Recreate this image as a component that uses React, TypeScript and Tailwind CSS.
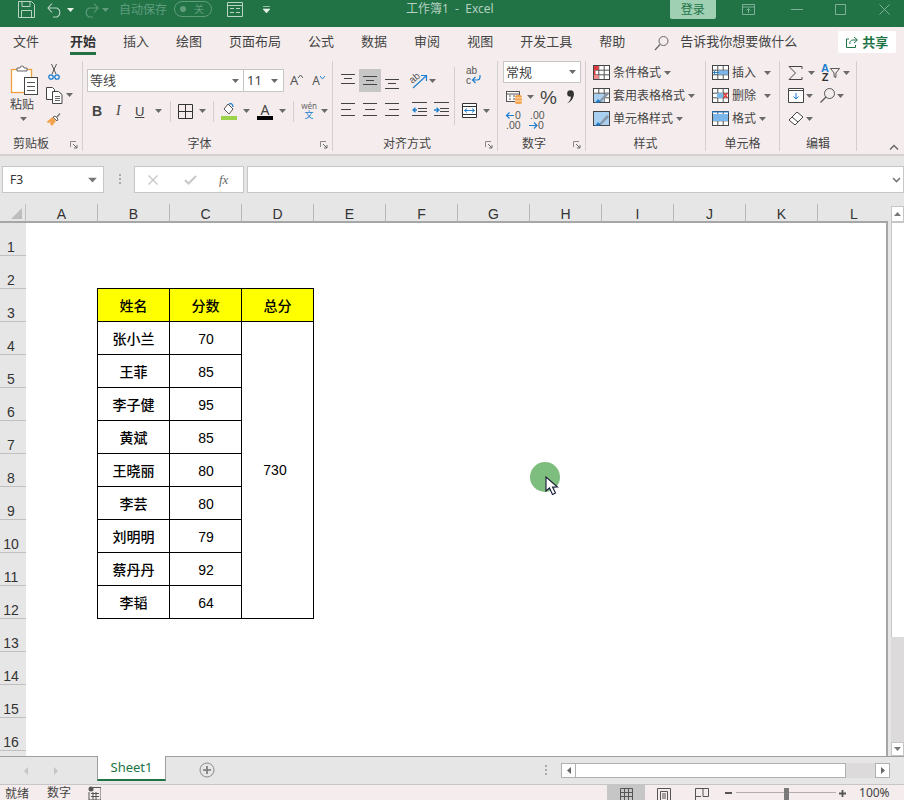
import React from "react";

const FONT = { fontFamily: '"Noto Sans","Noto Sans CJK SC",sans-serif' };

function Caret({ c = "#6a6a6a", className = "" }: { c?: string; className?: string }) {
  return (
    <svg width="7" height="4" viewBox="0 0 7 4" className={"shrink-0 " + className}>
      <path d="M0 0h7L3.5 4z" fill={c} />
    </svg>
  );
}

function Launcher() {
  return (
    <svg width="8" height="8" viewBox="0 0 8 8" className="shrink-0">
      <path d="M.5 6V.5H6" fill="none" stroke="#8a8a8a" />
      <path d="M3 3l4 4M7 4v3H4" fill="none" stroke="#6a6a6a" />
    </svg>
  );
}

function Label({ children, launcher = false, pr = "" }: { children: React.ReactNode; launcher?: boolean; pr?: string }) {
  return (
    <div className="flex h-[20px] shrink-0 items-center pt-[6px]">
      <span className={"flex-1 text-center text-[12px] leading-none text-[#444] " + pr}>{children}</span>
      {launcher ? (
        <span className="mr-[4px] mt-[2px]">
          <Launcher />
        </span>
      ) : null}
    </div>
  );
}

function Lines({ ys, w = 15, h = 15, seg }: { ys: number[]; w?: number; h?: number; seg?: [number, number][] }) {
  return (
    <svg width={w} height={h} viewBox={`0 0 ${w} ${h}`} className="shrink-0">
      {ys.map((y, i) => (
        <path key={i} d={`M${seg ? seg[i][0] : 0} ${y}.5H${seg ? seg[i][1] : w}`} stroke="#444" />
      ))}
    </svg>
  );
}

function Indent({ right = false }: { right?: boolean }) {
  return (
    <svg width="15" height="15" viewBox="0 0 15 15" className="shrink-0">
      <path d="M0 0.5H15M6 6.5H15M6 9.5H15M0 13.5H15" stroke="#444" />
      <path
        d={right ? "M0 8h4M2.5 5.7 5 8l-2.5 2.3" : "M5 8H1M3.5 5.7 1 8l2.5 2.3"}
        stroke="#1e7fd0"
        strokeWidth="1.3"
        fill="none"
      />
    </svg>
  );
}

function CellGridIcon({ children }: { children?: React.ReactNode }) {
  return (
    <svg width="17" height="15" viewBox="0 0 17 15" className="shrink-0">
      <rect x=".5" y=".5" width="16" height="14" fill="#fff" stroke="#444" />
      <path d="M.5 5.2h16M.5 9.8h16M5.8.5v14M11.2.5v14" stroke="#555" />
      {children}
    </svg>
  );
}

function StyleRow({ icon, text, caretGap = "ml-[3px]" }: { icon: React.ReactNode; text: string; caretGap?: string }) {
  return (
    <div className="flex h-[23px] items-center">
      {icon}
      <span className="ml-[3px] whitespace-nowrap text-[12px] leading-none text-[#444]">{text}</span>
      <Caret className={caretGap} />
    </div>
  );
}

const Brush = () => (
  <g>
    <path d="M6 13l8-9 2 2-8 8z" fill="#8a97a6" />
    <path d="M2 15l3-4 3 3z" fill="#1e7fd0" />
  </g>
);

function TitleBar() {
  const dim = "#5f9c7c";
  const lit = "#b9d3c4";
  return (
    <div className="flex h-[27px] items-start bg-[#217346] text-[12px]">
      <svg width="17" height="17" viewBox="0 0 17 17" className="ml-[18px] mt-[1px] shrink-0">
        <path d="M.5.5h13l3 3v13H.5z M4 .5v5h8v-5 M3.5 16.5v-7h10v7" fill="none" stroke={lit} />
      </svg>
      <svg width="16" height="16" viewBox="0 0 16 16" className="ml-[12px] mt-[2px] shrink-0">
        <path d="M1 6h9a5 5 0 0 1 0 9H6M5 1.5 1 6l4 4.5" fill="none" stroke={lit} strokeWidth="1.1" />
      </svg>
      <Caret c="#e8f0ea" className="ml-[4px] mt-[8px]" />
      <svg width="16" height="16" viewBox="0 0 16 16" className="ml-[9px] mt-[2px] shrink-0">
        <path d="M15 6H6a5 5 0 0 0 0 9h4M11 1.5 15 6l-4 4.5" fill="none" stroke={dim} strokeWidth="1.1" />
      </svg>
      <Caret c={dim} className="ml-[3px] mt-[8px]" />
      <span className="ml-[10px] mt-[1px] whitespace-nowrap leading-[18px]" style={{ color: dim }}>
        自动保存
      </span>
      <div className="ml-[7px] mt-[1px] flex h-[16px] w-[38px] shrink-0 items-center justify-between rounded-full border border-[#5f9c7c] pl-[5px] pr-[7px]">
        <span className="h-[6px] w-[6px] rounded-full bg-[#5f9c7c]" />
        <span className="text-[10px] leading-none" style={{ color: dim }}>
          关
        </span>
      </div>
      <svg width="16" height="15" viewBox="0 0 16 15" className="ml-[15px] mt-[2px] shrink-0">
        <path d="M.5.5h15v14H.5zM.5 3.500h15M3 6.500h4M9 6.500h4M3 10.500h4M9 10.500h4" fill="none" stroke={lit} />
      </svg>
      <svg width="7" height="8" viewBox="0 0 7 8" className="ml-[20px] mt-[6px] shrink-0">
        <path d="M0 .5h7M0 3h7L3.500 7z" fill="#e8f0ea" stroke="#e8f0ea" strokeWidth=".6" />
      </svg>
      <span className="ml-[136px] whitespace-nowrap leading-[18px] text-[#b4d0c0]">工作簿1&nbsp; -&nbsp; Excel</span>
      <div className="ml-[176px] flex h-[19px] w-[46px] shrink-0 items-center justify-center rounded-b-[2px] bg-[#9fd0b4] text-[#217346]">
        登录
      </div>
      <svg width="13" height="11" viewBox="0 0 13 11" className="ml-[26px] mt-[4px] shrink-0">
        <path d="M.5.5h12v10H.5zM.5 3h12M6.500 9V5M4.500 6.500l2-2 2 2" fill="none" stroke="#7fb198" />
      </svg>
      <svg width="12" height="2" viewBox="0 0 12 2" className="ml-[36px] mt-[9px] shrink-0">
        <path d="M0 .5h12" stroke="#7fb198" />
      </svg>
      <svg width="11" height="11" viewBox="0 0 11 11" className="ml-[32px] mt-[4px] shrink-0">
        <path d="M.5.5h10v10H.5z" fill="none" stroke="#7fb198" />
      </svg>
      <svg width="11" height="11" viewBox="0 0 11 11" className="ml-[33px] mt-[4px] shrink-0">
        <path d="M.5.5l10 10M10.500.5l-10 10" fill="none" stroke="#7fb198" />
      </svg>
    </div>
  );
}

function TabsRow() {
  const tabs = ["绘图", "页面布局", "公式", "数据", "审阅", "视图", "开发工具", "帮助"];
  return (
    <div className="flex h-[29px] items-start bg-[#f5eded] text-[13px] text-[#444]">
      <span className="ml-[13px] mt-[5px] whitespace-nowrap leading-[18px]">文件</span>
      <div className="ml-[31px] mt-[5px] flex shrink-0 flex-col items-stretch">
        <span className="whitespace-nowrap font-bold leading-[18px] text-[#333]">开始</span>
        <span className="mt-[2px] h-[3px] bg-[#217346]" />
      </div>
      <span className="ml-[27px] mt-[5px] whitespace-nowrap leading-[18px]">插入</span>
      {tabs.map((t) => (
        <span key={t} className="ml-[27px] mt-[5px] whitespace-nowrap leading-[18px]">
          {t}
        </span>
      ))}
      <svg width="15" height="16" viewBox="0 0 15 16" className="ml-[29px] mt-[8px] shrink-0">
        <circle cx="9.500" cy="6" r="4.500" fill="none" stroke="#666" />
        <path d="M6 9.500 1 15" stroke="#666" strokeWidth="1.2" />
      </svg>
      <span className="ml-[11px] mt-[5px] whitespace-nowrap leading-[18px]">告诉我你想要做什么</span>
      <div className="ml-[41px] mt-[4px] flex h-[22px] w-[58px] shrink-0 items-center justify-center gap-[4px] rounded-[2px] bg-white">
        <svg width="12" height="12" viewBox="0 0 12 12" className="shrink-0">
          <path d="M8 1l3.500 3L8 7M11 4H7a3 3 0 0 0-3 4M3 3H.5v8.500h9V9" fill="none" stroke="#217346" />
        </svg>
        <span className="whitespace-nowrap font-bold leading-none text-[#217346]">共享</span>
      </div>
    </div>
  );
}

function ClipboardGroup() {
  return (
    <section className="mt-[5px] flex h-[90px] w-[83px] shrink-0 flex-col border-r border-[#d4cfcf]">
      <div className="flex flex-1">
        <div className="ml-[10px] flex w-[30px] flex-col items-start">
          <svg width="30" height="32" viewBox="0 0 30 32" className="mt-[3px] shrink-0">
            <rect x="1.500" y="5.500" width="20" height="23" fill="#fff" stroke="#f0a040" strokeWidth="1.300" />
            <path d="M7 6V4h3a2 2 0 0 1 4 0h3v3H7z" fill="#fff" stroke="#666" />
            <rect x="14.500" y="13.500" width="13" height="17" fill="#fff" stroke="#444" />
            <path d="M17 18.500h8M17 22.500h8M17 26.500h8" stroke="#555" />
          </svg>
          <span className="mt-[1px] whitespace-nowrap text-[12px] leading-[16px] text-[#444]">粘贴</span>
          <Caret className="ml-[10px] mt-[4px]" />
        </div>
        <div className="ml-[6px] flex flex-col pt-[3px]">
          <svg width="12" height="16" viewBox="0 0 12 16" className="ml-[2px] shrink-0">
            <path d="M3.500 0 8 10M8.500 0 4 10" stroke="#555" fill="none" />
            <circle cx="3" cy="13" r="2.200" fill="none" stroke="#1e7fd0" strokeWidth="1.300" />
            <circle cx="9" cy="13" r="2.200" fill="none" stroke="#1e7fd0" strokeWidth="1.300" />
          </svg>
          <div className="mt-[7px] flex items-start">
            <svg width="17" height="17" viewBox="0 0 17 17" className="shrink-0">
              <path d="M.5.5h6l2 2v10H.5z" fill="#fff" stroke="#444" />
              <path d="M6.500 4.500h6l3.500 3v9H6.500z" fill="#fff" stroke="#444" />
              <path d="M9 9.500h5M9 11.500h5M9 13.500h5" stroke="#666" />
            </svg>
            <Caret className="ml-[3px] mt-[6px]" />
          </div>
          <svg width="16" height="16" viewBox="0 0 16 16" className="mt-[7px] shrink-0">
            <path d="M10 6 13.500 2l1 1L11 7z" fill="#777" />
            <path d="M9 5l3 3-1 2-4-4z" fill="#fff" stroke="#666" />
            <path d="M6.500 6 10 10l-4 5-2-2 .5-2-2 1-2-1z" fill="#f4a24a" />
          </svg>
        </div>
      </div>
      <Label launcher pr="pr-[8px]">
        剪贴板
      </Label>
    </section>
  );
}

function VSep({ className = "" }: { className?: string }) {
  return <span className={"h-[21px] w-px shrink-0 bg-[#d4cfcf] " + className} />;
}

function FontGroup() {
  return (
    <section className="mt-[5px] flex h-[90px] w-[250px] shrink-0 flex-col border-r border-[#d4cfcf]">
      <div className="flex-1">
        <div className="ml-[4px] mt-[8px] flex h-[23px] items-center">
          <div className="flex h-[23px] w-[157px] shrink-0 items-center border border-[#c6c6c6] bg-white pl-[2px] pr-[4px]">
            <span className="flex-1 text-[13px] leading-none text-[#444]">等线</span>
            <Caret />
          </div>
          <div className="flex h-[23px] w-[40px] shrink-0 items-center border border-l-0 border-[#c6c6c6] bg-white pl-[3px] pr-[5px]">
            <span className="flex-1 text-[13px] leading-none text-[#444]">11</span>
            <Caret />
          </div>
          <div className="ml-[6px] flex items-start text-[#555]">
            <span className="text-[13px] leading-none">A</span>
            <svg width="5" height="3" viewBox="0 0 5 3" className="mt-[1px]">
              <path d="M0 3l2.500-3L5 3" fill="none" stroke="#555" />
            </svg>
          </div>
          <div className="ml-[9px] flex items-start text-[#555]">
            <span className="text-[12px] leading-none">A</span>
            <svg width="5" height="3" viewBox="0 0 5 3" className="mt-[1px]">
              <path d="M0 0l2.500 3L5 0" fill="none" stroke="#1e7fd0" />
            </svg>
          </div>
        </div>
        <div className="mt-[8px] flex h-[22px] items-center">
          <span className="ml-[9px] w-[10px] text-[14px] font-bold leading-none text-[#444]" style={{ fontFamily: '"Liberation Sans",sans-serif' }}>
            B
          </span>
          <span className="ml-[14px] w-[6px] text-[14px] italic leading-none text-[#444]" style={{ fontFamily: '"Liberation Serif",serif' }}>
            I
          </span>
          <span className="ml-[13px] w-[11px] text-[13px] leading-none text-[#444] underline" style={{ fontFamily: '"Liberation Sans",sans-serif' }}>
            U
          </span>
          <Caret className="ml-[9px]" />
          <VSep className="ml-[8px]" />
          <svg width="15" height="15" viewBox="0 0 15 15" className="ml-[7px] shrink-0">
            <path d="M.5.5h14v14H.5zM7.500.5v14M.5 7.500h14" fill="none" stroke="#333" />
          </svg>
          <Caret className="ml-[6px]" />
          <VSep className="ml-[7px]" />
          <div className="ml-[7px] flex w-[16px] flex-col items-center">
            <svg width="16" height="13" viewBox="0 0 16 13">
              <path d="M7 1l5 5-4 5-5-5z" fill="#fff" stroke="#555" />
              <path d="M8 1c2-1 4 0 4 3" fill="none" stroke="#1e7fd0" strokeWidth="1.300" />
            </svg>
            <span className="h-[4px] w-[16px] bg-[#9bd44a]" />
          </div>
          <Caret className="ml-[6px]" />
          <div className="ml-[7px] flex w-[16px] flex-col items-center">
            <span className="text-[14px] leading-[13px] text-[#444]">A</span>
            <span className="h-[4px] w-[16px] bg-black" />
          </div>
          <Caret className="ml-[6px]" />
          <VSep className="ml-[7px]" />
          <div className="ml-[8px] flex w-[14px] flex-col items-center leading-none">
            <span className="text-[8px] leading-[8px] text-[#666]">wén</span>
            <span className="text-[9px] leading-[10px] text-[#1e7fd0]">文</span>
          </div>
          <Caret className="ml-[5px]" />
        </div>
      </div>
      <Label launcher pr="pr-[4px]">
        字体
      </Label>
    </section>
  );
}

function AlignGroup() {
  return (
    <section className="mt-[5px] flex h-[90px] w-[165px] shrink-0 flex-col border-r border-[#d4cfcf]">
      <div className="flex flex-1">
        <div className="ml-[8px] w-[113px]">
          <div className="mt-[8px] flex h-[23px] items-center">
            <div className="mb-[4px]">
              <Lines ys={[2, 6, 11]} w={14} h={13} seg={[[0, 14], [3, 11], [0, 14]]} />
            </div>
            <div className="ml-[4px] flex h-[23px] w-[22px] items-center justify-center bg-[#c6c6c6]">
              <Lines ys={[1, 5, 9]} w={14} h={11} seg={[[0, 14], [3, 11], [0, 14]]} />
            </div>
            <div className="ml-[4px] mt-[6px]">
              <Lines ys={[1, 5, 10]} w={14} h={11} seg={[[0, 14], [3, 11], [0, 14]]} />
            </div>
            <svg width="20" height="18" viewBox="0 0 20 18" className="ml-[10px] shrink-0">
              <text x="1" y="10" fontSize="10" fill="#555" transform="rotate(-40 5 8)" fontFamily="Liberation Sans">
                ab
              </text>
              <path d="M4 16 17 4M12 3.500h5.500V9" fill="none" stroke="#1e7fd0" strokeWidth="1.200" />
            </svg>
            <Caret className="mt-[1px]" />
          </div>
          <div className="mt-[10px] flex items-center">
            <Lines ys={[0, 6, 12]} w={14} h={14} seg={[[0, 14], [0, 10], [0, 14]]} />
            <div className="ml-[8px]">
              <Lines ys={[0, 6, 12]} w={14} h={14} seg={[[0, 14], [2, 12], [0, 14]]} />
            </div>
            <div className="ml-[8px]">
              <Lines ys={[0, 6, 12]} w={14} h={14} seg={[[0, 14], [4, 14], [0, 14]]} />
            </div>
            <div className="ml-[13px]">
              <Indent />
            </div>
            <div className="ml-[7px]">
              <Indent right />
            </div>
          </div>
        </div>
        <span className="mt-[6px] h-[58px] w-px shrink-0 bg-[#d4cfcf]" />
        <div className="ml-[7px] flex flex-col">
          <svg width="18" height="22" viewBox="0 0 18 22" className="ml-[3px] mt-[4px] shrink-0">
            <text x="1" y="9" fontSize="10" fill="#555" fontFamily="Liberation Sans">
              ab
            </text>
            <text x="1" y="19" fontSize="10" fill="#555" fontFamily="Liberation Sans">
              c
            </text>
            <path d="M15 10v2a3 3 0 0 1-3 3H8M10.500 12 7.500 15l3 3" fill="none" stroke="#1e7fd0" strokeWidth="1.200" />
          </svg>
          <div className="mt-[16px] flex items-center">
            <svg width="15" height="15" viewBox="0 0 15 15" className="shrink-0">
              <path d="M.5.5h14v14H.5z" fill="#fff" stroke="#333" />
              <path d="M.5 3.500h14M.5 11.500h14" stroke="#333" />
              <path d="M2.500 7.500h10M5 5.500l-2.500 2 2.500 2M10 5.500l2.500 2-2.500 2" fill="none" stroke="#1e7fd0" />
            </svg>
            <Caret className="ml-[6px]" />
          </div>
        </div>
      </div>
      <Label launcher pr="pr-[4px]">
        对齐方式
      </Label>
    </section>
  );
}

function NumberGroup() {
  const mono = { fontFamily: '"Liberation Sans",sans-serif' };
  return (
    <section className="mt-[5px] flex h-[90px] w-[88px] shrink-0 flex-col border-r border-[#d4cfcf]">
      <div className="flex-1">
        <div className="ml-[5px] flex h-[22px] w-[78px] items-center border border-[#c6c6c6] bg-white pl-[2px] pr-[4px]">
          <span className="flex-1 text-[13px] leading-none text-[#444]">常规</span>
          <Caret />
        </div>
        <div className="mt-[3px] flex h-[22px] items-center">
          <svg width="16" height="15" viewBox="0 0 16 15" className="ml-[8px] shrink-0">
            <rect x=".5" y="1.500" width="13" height="10" fill="#fff" stroke="#555" />
            <path d="M.5 4h13M3 6h2M3 9h2M7 6h2M7 9h2" stroke="#555" />
            <rect x="9" y="5" width="7" height="9" rx="2" fill="#f4a24a" />
            <path d="M9 8h7M9 11h7" stroke="#fff" strokeWidth=".7" />
          </svg>
          <Caret className="ml-[5px]" />
          <span className="ml-[6px] w-[16px] text-[19px] leading-none text-[#444]" style={mono}>
            %
          </span>
          <svg width="9" height="14" viewBox="0 0 9 14" className="ml-[10px] shrink-0">
            <circle cx="4.500" cy="3.500" r="3.300" fill="#333" />
            <path d="M7.800 3.500C8 8 5 12 1 13.500 4 11 5 8.500 5 6z" fill="#333" />
          </svg>
        </div>
        <div className="mt-[1px] flex h-[22px] items-center">
          <svg width="18" height="20" viewBox="0 0 18 20" className="ml-[7px] shrink-0">
            <path d="M9 5.500H1.500M4.500 2.500l-3 3 3 3" fill="none" stroke="#1e7fd0" strokeWidth="1.200" />
            <text x="10" y="9" fontSize="10.500" fill="#555" style={mono}>
              0
            </text>
            <text x="1" y="19" fontSize="10.500" fill="#555" style={mono}>
              .00
            </text>
          </svg>
          <svg width="18" height="20" viewBox="0 0 18 20" className="ml-[5px] shrink-0">
            <text x="2" y="9" fontSize="10.500" fill="#555" style={mono}>
              .00
            </text>
            <path d="M1 15.500h8M6 12.500l3 3-3 3" fill="none" stroke="#1e7fd0" strokeWidth="1.200" />
            <text x="10" y="19" fontSize="10.500" fill="#555" style={mono}>
              0
            </text>
          </svg>
        </div>
      </div>
      <Label launcher pr="pr-[3px]">
        数字
      </Label>
    </section>
  );
}

function StylesGroup() {
  return (
    <section className="mt-[5px] flex h-[90px] w-[120px] shrink-0 flex-col border-r border-[#d4cfcf]">
      <div className="ml-[7px] flex-1">
        <StyleRow
          icon={
            <CellGridIcon>
              <rect x="1" y="1" width="4.500" height="4" fill="#e23a3a" />
              <rect x="1" y="10" width="4.500" height="4" fill="#f28c8c" />
              <rect x="1" y="5.500" width="1.500" height="4.500" fill="#e23a3a" />
            </CellGridIcon>
          }
          text="条件格式"
        />
        <StyleRow
          icon={
            <CellGridIcon>
              <rect x="1" y="6" width="10" height="8" fill="#a9d0f0" />
              <Brush />
            </CellGridIcon>
          }
          text="套用表格格式"
        />
        <StyleRow
          icon={
            <CellGridIcon>
              <rect x="1" y="1" width="15" height="13" fill="#a9d0f0" />
              <path d="M.5.500h16v14H.5z" fill="none" stroke="#444" />
              <Brush />
            </CellGridIcon>
          }
          text="单元格样式"
        />
      </div>
      <Label>样式</Label>
    </section>
  );
}

function CellsGroup() {
  return (
    <section className="mt-[5px] flex h-[90px] w-[74px] shrink-0 flex-col border-r border-[#d4cfcf]">
      <div className="ml-[6px] flex-1">
        <StyleRow
          icon={
            <CellGridIcon>
              <rect x="6" y="5.500" width="10" height="4" fill="#7ab6ea" />
              <path d="M7 7.500H1.500M4 5 1.500 7.500 4 10" fill="none" stroke="#1e7fd0" />
            </CellGridIcon>
          }
          text="插入"
          caretGap="ml-[8px]"
        />
        <StyleRow
          icon={
            <CellGridIcon>
              <rect x="5" y="5" width="6" height="5" fill="#7ab6ea" />
              <path d="M11.500 5l4 5M15.500 5l-4 5" stroke="#e23a3a" strokeWidth="1.300" />
            </CellGridIcon>
          }
          text="删除"
          caretGap="ml-[8px]"
        />
        <StyleRow
          icon={
            <CellGridIcon>
              <rect x="1" y="3" width="15" height="7" fill="#7ab6ea" />
              <path d="M.5 0v2M16.500 0v2M.5 1h16" stroke="#1e7fd0" />
            </CellGridIcon>
          }
          text="格式"
        />
      </div>
      <Label>单元格</Label>
    </section>
  );
}

function EditGroup() {
  return (
    <section className="mt-[5px] flex h-[90px] w-[77px] shrink-0 flex-col border-r border-[#d4cfcf]">
      <div className="ml-[8px] flex-1">
        <div className="flex h-[23px] items-center">
          <svg width="15" height="14" viewBox="0 0 15 14" className="shrink-0">
            <path d="M14 3V.5H1L7.500 7 1 13.500h13V11" fill="none" stroke="#444" />
          </svg>
          <Caret className="ml-[5px]" />
          <div
            className="ml-[6px] flex w-[8px] flex-col items-center text-[11px] font-bold leading-[9px]"
            style={{ fontFamily: '"Liberation Sans",sans-serif' }}
          >
            <span className="text-[#1e7fd0]">A</span>
            <span className="text-[#333]">Z</span>
          </div>
          <svg width="10" height="10" viewBox="0 0 11 11" className="ml-[1px] shrink-0">
            <path d="M.5.500h10L6.500 5.500v5l-2-1v-4z" fill="none" stroke="#444" />
          </svg>
          <Caret className="ml-[3px]" />
        </div>
        <div className="flex h-[23px] items-center">
          <svg width="16" height="15" viewBox="0 0 16 15" className="shrink-0">
            <path d="M.5.500h15v14H.5zM.5 2.500h15" fill="#fff" stroke="#444" />
            <path d="M8 5v6M5.500 8.500 8 11l2.500-2.500" fill="none" stroke="#1e7fd0" />
          </svg>
          <Caret className="ml-[2px]" />
          <svg width="15" height="15" viewBox="0 0 15 15" className="ml-[7px] shrink-0">
            <circle cx="9.500" cy="5.500" r="5" fill="none" stroke="#555" />
            <path d="M6 9 .5 14.500" stroke="#555" strokeWidth="1.300" />
          </svg>
          <Caret className="ml-[2px]" />
        </div>
        <div className="flex h-[23px] items-center">
          <svg width="16" height="15" viewBox="0 0 16 15" className="shrink-0">
            <path d="M1 9 9 1l6 5-8 8z" fill="#fff" stroke="#444" />
            <path d="M4 6l6 5" stroke="#444" />
          </svg>
          <Caret className="ml-[2px]" />
        </div>
      </div>
      <Label>编辑</Label>
    </section>
  );
}

function Ribbon() {
  return (
    <div className="flex h-[100px] items-start border-b-2 border-[#d6d1d1] bg-[#f5eded]">
      <ClipboardGroup />
      <FontGroup />
      <AlignGroup />
      <NumberGroup />
      <StylesGroup />
      <CellsGroup />
      <EditGroup />
      <svg width="10" height="6" viewBox="0 0 10 6" className="ml-[32px] mt-[88px] shrink-0">
        <path d="M1 5.500 5 1.500l4 4" fill="none" stroke="#6a6a6a" strokeWidth="1.500" />
      </svg>
    </div>
  );
}

function Dots({ className = "" }: { className?: string }) {
  return (
    <div className={"flex shrink-0 flex-col gap-[2px] " + className}>
      <span className="h-[2px] w-[2px] bg-[#aaa]" />
      <span className="h-[2px] w-[2px] bg-[#aaa]" />
      <span className="h-[2px] w-[2px] bg-[#aaa]" />
    </div>
  );
}

function FormulaBar() {
  return (
    <div className="flex h-[48px] items-start bg-[#e6e6e6] pt-[10px]">
      <div className="ml-[2px] flex h-[27px] w-[102px] shrink-0 items-center border border-[#c6c6c6] bg-white px-[7px]">
        <span className="flex-1 text-[12px] leading-none text-[#333]">F3</span>
        <Caret c="#777" className="scale-[1.3]" />
      </div>
      <Dots className="ml-[15px] mt-[8px]" />
      <div className="ml-[13px] flex h-[27px] w-[110px] shrink-0 items-center border border-[#c6c6c6] bg-white">
        <svg width="10" height="10" viewBox="0 0 10 10" className="ml-[13px] shrink-0">
          <path d="M.5.500l9 9M9.500.500l-9 9" stroke="#c8c8c8" strokeWidth="1.400" />
        </svg>
        <svg width="13" height="10" viewBox="0 0 13 10" className="ml-[26px] shrink-0">
          <path d="M1 5l3.500 3.500L12 1" fill="none" stroke="#c8c8c8" strokeWidth="2" />
        </svg>
        <span
          className="ml-[22px] text-[13px] italic leading-none text-[#666]"
          style={{ fontFamily: '"Liberation Serif",serif' }}
        >
          fx
        </span>
      </div>
      <div className="ml-[3px] flex h-[27px] flex-1 items-center justify-end border border-[#c6c6c6] bg-white pr-[2px]">
        <svg width="9" height="6" viewBox="0 0 9 6" className="shrink-0">
          <path d="M1 1l3.500 3.500L8 1" fill="none" stroke="#777" strokeWidth="1.600" />
        </svg>
      </div>
    </div>
  );
}

const ROWS: [string, string][] = [
  ["张小兰", "70"],
  ["王菲", "85"],
  ["李子健", "95"],
  ["黄斌", "85"],
  ["王晓丽", "80"],
  ["李芸", "80"],
  ["刘明明", "79"],
  ["蔡丹丹", "92"],
  ["李韬", "64"],
];

const NUM = { fontFamily: '"Liberation Sans",sans-serif' };

function DataTable() {
  const cell = "flex items-center justify-center border-b border-r border-black text-[14px] text-black";
  return (
    <div className="ml-[71px] mt-[65px] grid w-[217px] grid-cols-[72px_72px_72px] grid-rows-[33px_repeat(9,33px)] border-l border-t border-black">
      {["姓名", "分数", "总分"].map((h) => (
        <div key={h} className={cell + " bg-[#ffff00] pt-[1px] font-medium"}>
          {h}
        </div>
      ))}
      {ROWS.map(([n, s], i) => (
        <React.Fragment key={n}>
          <div className={cell + " pt-[1px] font-medium"}>{n}</div>
          <div className={cell + " pl-[1px] pt-[2px]"} style={NUM}>
            {s}
          </div>
          {i === 0 ? (
            <div className={cell + " row-span-9 pr-[5px]"} style={NUM}>
              730
            </div>
          ) : null}
        </React.Fragment>
      ))}
    </div>
  );
}

function Sheet() {
  const cols = ["A", "B", "C", "D", "E", "F", "G", "H", "I", "J", "K", "L"];
  const rows = Array.from({ length: 16 }, (_, i) => i + 1);
  return (
    <div className="flex h-[552px] bg-[#e6e6e6]">
      <div className="flex w-[888px] shrink-0 flex-col">
        <div className="flex h-[19px] shrink-0 border-b-2 border-[#a6a6a6]">
          <div className="flex w-[26px] shrink-0 items-end justify-end border-r border-[#c0c0c0] pb-[2px] pr-[3px]">
            <svg width="11" height="11" viewBox="0 0 11 11">
              <path d="M11 0v11H0z" fill="#bdbdbd" />
            </svg>
          </div>
          {cols.map((c, i) => (
            <div
              key={c}
              className={
                "flex w-[72px] shrink-0 items-center justify-center pt-[3px] text-[14px] leading-none text-[#333] " +
                (i < 11 ? "border-r border-[#b8b8b8]" : "")
              }
              style={NUM}
            >
              {c}
            </div>
          ))}
        </div>
        <div className="flex min-h-0 flex-1">
          <div className="w-[26px] shrink-0 overflow-hidden">
            {rows.map((r) => (
              <div
                key={r}
                className="flex h-[33px] w-[26px] items-end justify-center border-b border-[#c0c0c0] pr-[4px] text-[14px] leading-[16px] text-[#333]"
                style={NUM}
              >
                {r}
              </div>
            ))}
          </div>
          <div className="min-w-0 flex-1 overflow-hidden border-r-2 border-[#a6a6a6] bg-white">
            <DataTable />
          </div>
        </div>
      </div>
      <div className="ml-[3px] flex w-[13px] flex-col">
        <div className="mt-[2px] flex h-[15px] items-center justify-center border border-b-0 border-[#c6c6c6] bg-white">
          <svg width="7" height="4" viewBox="0 0 7 4">
            <path d="M0 4h7L3.500 0z" fill="#777" />
          </svg>
        </div>
        <div className="h-[2px] bg-[#c6c6c6]" />
        <div className="h-[414px] border-l border-[#c6c6c6] bg-white" />
        <div className="flex-1 bg-[#dcdadb]" />
        <div className="flex h-[14px] items-center justify-center border border-[#c6c6c6] bg-white">
          <Caret c="#777" />
        </div>
      </div>
    </div>
  );
}

function SheetTabs() {
  return (
    <div className="flex h-[29px] items-start border-b border-t border-b-[#c6c6c6] border-t-[#9e9e9e] bg-[#e6e6e6]">
      <svg width="4" height="8" viewBox="0 0 4 8" className="ml-[24px] mt-[10px] shrink-0">
        <path d="M4 0v8L0 4z" fill="#c6c6c6" />
      </svg>
      <svg width="4" height="8" viewBox="0 0 4 8" className="ml-[26px] mt-[10px] shrink-0">
        <path d="M0 0v8l4-4z" fill="#c6c6c6" />
      </svg>
      <div className="ml-[39px] mt-[-1px] flex h-[25px] w-[69px] shrink-0 items-center justify-center border-x border-b-2 border-x-[#9e9e9e] border-b-[#217346] bg-white text-[13px] leading-none text-[#217346]">
        Sheet1
      </div>
      <svg width="16" height="16" viewBox="0 0 16 16" className="ml-[33px] mt-[5px] shrink-0">
        <circle cx="8" cy="8" r="7" fill="none" stroke="#8a8a8a" />
        <path d="M4 8h8M8 4v8" stroke="#777" strokeWidth="1.600" />
      </svg>
      <Dots className="ml-[330px] mt-[8px]" />
      <div className="ml-[14px] mt-[6px] flex h-[15px] w-[329px] shrink-0 items-stretch">
        <div className="flex w-[15px] items-center justify-center border border-[#b0b0b0] bg-white">
          <svg width="4" height="7" viewBox="0 0 4 7">
            <path d="M4 0v7L0 3.500z" fill="#666" />
          </svg>
        </div>
        <div className="w-[270px] border border-l-0 border-[#b0b0b0] bg-white" />
        <div className="flex-1 bg-[#dcdadb]" />
        <div className="flex w-[15px] items-center justify-center border border-[#b0b0b0] bg-white">
          <svg width="4" height="7" viewBox="0 0 4 7">
            <path d="M0 0v7l4-3.500z" fill="#666" />
          </svg>
        </div>
      </div>
    </div>
  );
}

function StatusBar() {
  return (
    <div className="flex h-[15px] items-start overflow-hidden bg-[#f5eded] text-[12px] leading-[16px] text-[#444]">
      <span className="ml-[5px] mt-[1px] whitespace-nowrap">就绪</span>
      <span className="ml-[18px] whitespace-nowrap">数字</span>
      <svg width="13" height="14" viewBox="0 0 13 14" className="ml-[17px] mt-[1px] shrink-0">
        <circle cx="3" cy="3" r="2.500" fill="#555" />
        <path d="M5 1.500h8v12.500H1V6M3 7.500h8M3 10.500h8M5 6v8M8 6v8" fill="none" stroke="#555" />
      </svg>
      <div className="ml-[506px] flex h-[15px] w-[38px] shrink-0 items-start justify-center bg-[#c6c6c6] pt-[3px]">
        <svg width="13" height="12" viewBox="0 0 13 12">
          <path d="M.5.500h12v12H.5zM.5 4.500h12M.5 8.500h12M4.500.500v12M8.500.500v12" fill="none" stroke="#555" />
        </svg>
      </div>
      <svg width="14" height="12" viewBox="0 0 14 12" className="ml-[12px] mt-[3px] shrink-0">
        <path d="M.5.500h13v13H.5zM3.500 3.500h7v10h-7zM5 6h4M5 8h4M5 10h4" fill="none" stroke="#555" />
      </svg>
      <svg width="14" height="12" viewBox="0 0 14 12" className="ml-[24px] mt-[3px] shrink-0">
        <path d="M.5.500h13v8H8V.500M.5.500v12M.5 8.500H6" fill="none" stroke="#555" />
      </svg>
      <span className="ml-[16px] mt-[7px] h-[2px] w-[7px] shrink-0 bg-[#555]" />
      <div className="relative ml-[4px] h-[15px] w-[100px] shrink-0">
        <div className="mt-[7px] h-px bg-[#b5aeae]" />
        <div className="absolute left-[48px] top-[3px] h-[12px] w-[5px] bg-[#7a7a7a]" />
      </div>
      <svg width="7" height="7" viewBox="0 0 7 7" className="ml-[3px] mt-[5px] shrink-0">
        <path d="M0 3.500h7M3.500 0v7" stroke="#555" strokeWidth="1.800" />
      </svg>
      <span className="ml-[13px] whitespace-nowrap text-[12px]">100%</span>
    </div>
  );
}

function Pointer() {
  return (
    <div className="pointer-events-none absolute left-[530px] top-[462px] h-[30px] w-[30px] rounded-full bg-[#7dbd7d]">
      <svg width="14" height="21" viewBox="0 0 14 21" className="absolute left-[15px] top-[14px]">
        <path d="M1 1v14l3.500-3 3 6.500 3-1.500-3-6h5z" fill="#fff" stroke="#1a1a3a" strokeWidth="1.100" />
      </svg>
    </div>
  );
}

export default function App() {
  return (
    <div className="relative h-[800px] w-[904px] overflow-hidden bg-white" style={FONT}>
      <TitleBar />
      <TabsRow />
      <Ribbon />
      <FormulaBar />
      <Sheet />
      <SheetTabs />
      <StatusBar />
      <Pointer />
    </div>
  );
}
